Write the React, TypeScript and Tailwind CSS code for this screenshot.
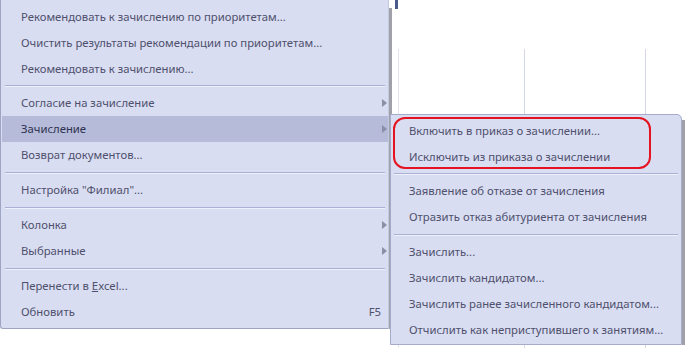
import React from "react";

type Item =
  | { sep: true; h?: string }
  | { sep?: false; label: React.ReactNode; sub?: boolean; hot?: boolean; key?: string };

const mainItems: Item[] = [
  { label: "Рекомендовать к зачислению по приоритетам..." },
  { label: "Очистить результаты рекомендации по приоритетам..." },
  { label: "Рекомендовать к зачислению..." },
  { sep: true },
  { label: "Согласие на зачисление", sub: true },
  { label: "Зачисление", sub: true, hot: true },
  { label: "Возврат документов..." },
  { sep: true, h: "h-[9px]" },
  { label: 'Настройка "Филиал"...' },
  { sep: true, h: "h-[9px]" },
  { label: "Колонка", sub: true },
  { label: "Выбранные", sub: true },
  { sep: true, h: "h-[9px]" },
  {
    label: (
      <>
        Перенести в <span className="underline">E</span>xcel...
      </>
    ),
  },
  { label: "Обновить", key: "F5" },
];

const subItems: Item[] = [
  { label: "Включить в приказ о зачислении..." },
  { label: "Исключить из приказа о зачислении" },
  { sep: true },
  { label: "Заявление об отказе от зачисления" },
  { label: "Отразить отказ абитуриента от зачисления" },
  { sep: true, h: "h-[9px]" },
  { label: "Зачислить..." },
  { label: "Зачислить кандидатом..." },
  { label: "Зачислить ранее зачисленного кандидатом..." },
  { label: "Отчислить как неприступившего к занятиям..." },
];

const Arrow = () => (
  <svg width="5" height="8" viewBox="0 0 5 8" className="absolute right-[1px]">
    <path d="M0 0 L5 4 L0 8 Z" fill="#8a8ea6" />
  </svg>
);

const MenuRows = ({ items, pad }: { items: Item[]; pad: string }) => (
  <>
    {items.map((it, i) =>
      it.sep ? (
        <div key={i} className={`${it.h ?? "h-[8px]"} flex flex-col justify-center px-[3px]`}>
          <div className="h-px bg-[#aab0d4]" />
          <div className="h-px bg-[#eef0fb]" />
        </div>
      ) : (
        <div
          key={i}
          className={`relative h-[26px] flex items-center ${pad} ${
            it.hot ? "bg-[#b5bbd9] text-[#2f3150]" : "text-[#4e506c]"
          }`}
        >
          <span className="flex-1 whitespace-nowrap">{it.label}</span>
          {it.key && <span className="pr-[3px]">{it.key}</span>}
          {it.sub && <Arrow />}
        </div>
      )
    )}
  </>
);

export default function App() {
  return (
    <div
      className="relative w-[686px] h-[348px] bg-white overflow-hidden text-[11.3px]"
      style={{ fontFamily: '"Noto Sans", sans-serif' }}
    >
      {/* grid behind the menus */}
      <div className="absolute left-[398px] top-[49px] right-0 bottom-0 flex">
        <div className="w-[127px] border-l border-[#e4e4ee] border-r border-r-[#d4d6ea]" />
        <div className="w-[121px] border-r border-[#d4d6ea]" />
      </div>
      <div className="absolute left-[395px] top-0 w-[3px] h-[9px] bg-[#4a5a8c]" />
      <div className="absolute left-0 top-0 w-[2px] h-[4px] bg-[#4a5a8c]" />

      {/* main menu */}
      <div className="relative w-[392px] h-[329px] flex">
        <div className="w-[389px] pt-[4px] bg-[#d9ddf2] border-l border-l-[#9ea4c4] border-b border-b-[#9ea4c4] border-r border-r-[#c5c9e2] rounded-bl-[3px]">
          <div className="pl-[1px]">
            <MenuRows items={mainItems} pad="pl-[19px] pr-[4px]" />
          </div>
        </div>
        <div className="w-[3px] bg-[#a0a0a8] mt-[8px]" />
      </div>

      {/* submenu */}
      <div className="absolute left-[390px] top-[114px] flex">
        <div className="w-[292px] h-[231px] pt-[3px] bg-[#d9ddf2] border border-[#a6abcc] rounded-tr-[5px]">
          <MenuRows items={subItems} pad="pl-[18px] pr-[4px]" />
        </div>
        <div className="w-[3px] mt-[6px] bg-[#a0a0a8]" />
      </div>

      {/* red highlight */}
      <div className="absolute left-[393px] top-[117px] w-[258px] h-[52px] border-2 border-[#e5121f] rounded-[12px]" />
    </div>
  );
}
